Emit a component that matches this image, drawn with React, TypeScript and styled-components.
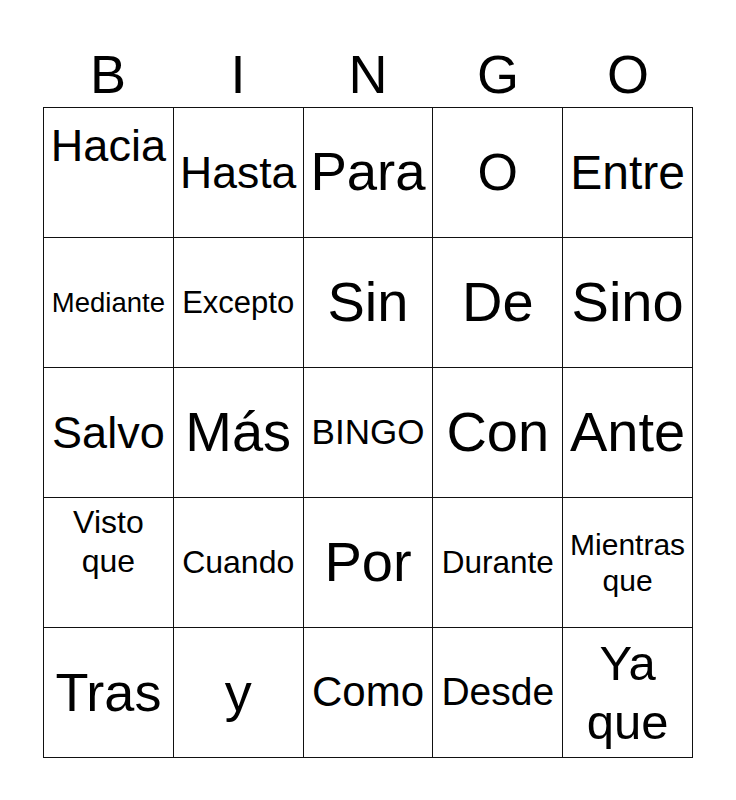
import React from 'react';
import styled, { createGlobalStyle } from 'styled-components';

const GlobalStyle = createGlobalStyle`
  html, body {
    margin: 0;
    padding: 0;
    background: #ffffff;
  }
  body {
    font-family: "Liberation Sans", Arial, sans-serif;
    color: #000;
  }
`;

const Page = styled.div`
  width: 650px;
  margin: 0 auto;
`;

const Header = styled.div`
  display: grid;
  grid-template-columns: repeat(5, 1fr);
  height: 107px;
  padding-top: 47px;
  box-sizing: border-box;
`;

const Letter = styled.div`
  font-size: 54px;
  line-height: 54px;
  text-align: center;
`;

const Board = styled.div`
  display: grid;
  grid-template-columns: repeat(5, 1fr);
  grid-auto-rows: 129px;
  gap: 1px;
  background: #111;
  border: 1px solid #111;
`;

const Cell = styled.div<{ $size: number; $top?: number; $lh?: number }>`
  background: #fff;
  display: flex;
  align-items: ${p => (p.$top !== undefined ? 'flex-start' : 'center')};
  justify-content: center;
  padding-top: ${p => p.$top ?? 0}px;
  box-sizing: border-box;
  text-align: center;
  font-size: ${p => p.$size}px;
  line-height: ${p => p.$lh ?? 1.15};
`;

interface Square {
  text: string[];
  size: number;
  top?: number;
  lh?: number;
}

const squares: Square[] = [
  { text: ['Hacia'], size: 45, top: 12 },
  { text: ['Hasta'], size: 44.5 },
  { text: ['Para'], size: 54.5 },
  { text: ['O'], size: 52 },
  { text: ['Entre'], size: 48 },

  { text: ['Mediante'], size: 27.5 },
  { text: ['Excepto'], size: 31 },
  { text: ['Sin'], size: 56 },
  { text: ['De'], size: 56 },
  { text: ['Sino'], size: 56 },

  { text: ['Salvo'], size: 45 },
  { text: ['Más'], size: 56 },
  { text: ['BINGO'], size: 35 },
  { text: ['Con'], size: 56 },
  { text: ['Ante'], size: 56 },

  { text: ['Visto', 'que'], size: 32, top: 5, lh: 1.22 },
  { text: ['Cuando'], size: 32 },
  { text: ['Por'], size: 56 },
  { text: ['Durante'], size: 31.5 },
  { text: ['Mientras', 'que'], size: 30, lh: 1.2 },

  { text: ['Tras'], size: 54 },
  { text: ['y'], size: 54 },
  { text: ['Como'], size: 42 },
  { text: ['Desde'], size: 39 },
  { text: ['Ya', 'que'], size: 49, lh: 1.19 },
];

export default function App() {
  return (
    <>
      <GlobalStyle />
      <Page>
        <Header>
          {['B', 'I', 'N', 'G', 'O'].map(l => (
            <Letter key={l}>{l}</Letter>
          ))}
        </Header>
        <Board>
          {squares.map((s, i) => (
            <Cell key={i} $size={s.size} $top={s.top} $lh={s.lh}>
              <div>
                {s.text.map((t, j) => (
                  <div key={j}>{t}</div>
                ))}
              </div>
            </Cell>
          ))}
        </Board>
      </Page>
    </>
  );
}
